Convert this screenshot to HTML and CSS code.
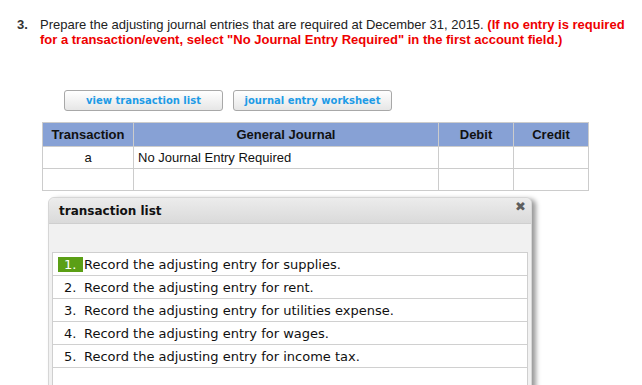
FILE: index.html
```html
<!DOCTYPE html>
<html lang="en">
<head>
<meta charset="UTF-8" />
<title>Adjusting entries</title>
<link rel="stylesheet" href="styles.css">
</head>
<body>
<div class="question">
  <span class="q-num">3.</span>
  <p class="q-text">Prepare the adjusting journal entries that are required at December 31, 2015. <strong class="warn">(If no entry is required for a transaction/event, select "No Journal Entry Required" in the first account field.)</strong></p>
</div>

<div class="actions">
  <button class="btn">view transaction list</button>
  <button class="btn">journal entry worksheet</button>
</div>

<table class="journal">
  <thead>
    <tr>
      <th class="col-tr">Transaction</th>
      <th class="col-gj">General Journal</th>
      <th class="col-amt">Debit</th>
      <th class="col-amt">Credit</th>
    </tr>
  </thead>
  <tbody>
    <tr>
      <td class="center">a</td>
      <td>No Journal Entry Required</td>
      <td></td>
      <td></td>
    </tr>
    <tr>
      <td></td>
      <td></td>
      <td></td>
      <td></td>
    </tr>
  </tbody>
</table>

<div class="dialog">
  <div class="dialog-title">
    <span>transaction list</span>
    <span class="close">&#x2716;</span>
  </div>
  <div class="dialog-body">
    <ol class="tx-list">
      <li><span class="num active">1.</span>Record the adjusting entry for supplies.</li>
      <li><span class="num">2.</span>Record the adjusting entry for rent.</li>
      <li><span class="num">3.</span>Record the adjusting entry for utilities expense.</li>
      <li><span class="num">4.</span>Record the adjusting entry for wages.</li>
      <li><span class="num">5.</span>Record the adjusting entry for income tax.</li>
      <li class="blank"></li>
    </ol>
  </div>
</div>
</body>
</html>
```

FILE: styles.css
```css
*, *::before, *::after {
  box-sizing: border-box;
}
html, body {
  height: 100%;
}
body {
  margin: 0;
  overflow: hidden;
  background: #fff;
  color: #111;
  font-family: "Liberation Sans", Arial, sans-serif;
  font-size: 13px;
}

/* Question */
.question {
  display: flex;
  padding: 17px 12px 0 17px;
}
.q-num {
  flex-shrink: 0;
  font-weight: 700;
  width: 23px;
  line-height: 15px;
  color: #333;
}
.q-text {
  margin: 0;
  line-height: 15px;
  color: #222;
}
.warn {
  color: #ee0000;
}

/* Buttons */
.actions {
  display: flex;
  gap: 10px;
  margin: 43px 0 0 64px;
}
.btn {
  width: 159px;
  height: 21px;
  padding: 0;
  border: 1px solid #a8a8a8;
  border-radius: 3px;
  background: linear-gradient(#ffffff, #e6e6e6);
  color: #1e9be6;
  font-family: "DejaVu Sans", Verdana, sans-serif;
  font-size: 10px;
  font-weight: 700;
}

/* Journal table */
.journal {
  margin: 11px 0 0 42px;
  width: 547px;
  border-collapse: collapse;
}
.journal th,
.journal td {
  border: 1px solid #cccccc;
  height: 22px;
  padding: 0 4px;
}
.journal th {
  height: 24px;
  background: #87a1d5;
  font-weight: 700;
  color: #111;
}
.col-tr { width: 91px; }
.col-amt { width: 75px; }
.center { text-align: center; }

/* Transaction list dialog */
.dialog {
  margin: 6px 0 0 48px;
  width: 484px;
  height: 260px;
  border: 1px solid #d6d6d6;
  border-radius: 6px 6px 0 0;
  background: #f1f1f1;
  box-shadow: 4px 2px 5px rgba(0, 0, 0, 0.4);
}
.dialog-title {
  display: flex;
  justify-content: space-between;
  align-items: center;
  height: 26px;
  padding: 0 5px 0 10px;
  border-bottom: 1px solid #cfcfcf;
  border-radius: 6px 6px 0 0;
  background: linear-gradient(#ececec, #dadada);
  font-family: "DejaVu Sans", Verdana, sans-serif;
  font-size: 12px;
  font-weight: 700;
  color: #111;
}
.close {
  color: #5e5e5e;
  font-size: 13px;
  margin-top: -8px;
}
.dialog-body {
  padding: 28px 3px 0 3px;
}
.tx-list {
  list-style: none;
  margin: 0;
  padding: 0;
  background: #fff;
  border: 1px solid #cfcfcf;
  font-family: "DejaVu Sans", Verdana, sans-serif;
  font-size: 13px;
  color: #111;
}
.tx-list li {
  display: flex;
  align-items: center;
  height: 23px;
  padding-left: 5px;
  border-bottom: 1px solid #d0d0d0;
}
.tx-list li.blank {
  height: 60px;
  border-bottom: none;
}
.num {
  width: 25px;
  padding-left: 6px;
  margin-right: 1px;
  line-height: 15px;
}
.num.active {
  background: #5b9f15;
  color: #fff;
}
```
